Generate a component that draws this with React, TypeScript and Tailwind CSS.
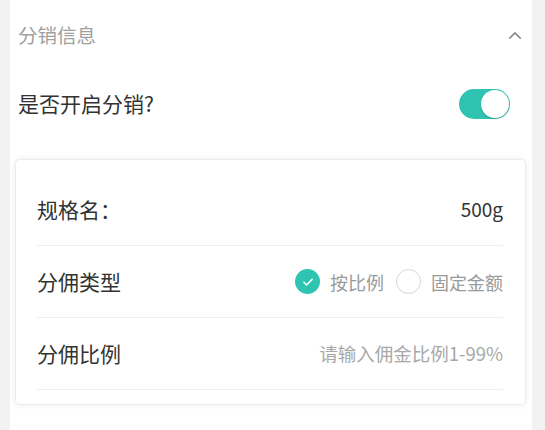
import React, { useState } from 'react';

const font = { fontFamily: '"Noto Sans CJK SC", "Noto Sans", sans-serif' };

const Toggle = ({ on, onChange }: { on: boolean; onChange: (v: boolean) => void }) => (
    <button
        type="button"
        onClick={() => onChange(!on)}
        className={`w-[51px] h-[30px] rounded-full p-[1px] flex items-center transition-colors ${on ? 'bg-[#2ec4b1] justify-end' : 'bg-[#e5e5e5] justify-start'}`}
    >
        <span className="w-[28px] h-[28px] rounded-full bg-white shadow-[0_1px_2px_rgba(0,0,0,0.2)]" />
    </button>
);

const Radio = ({ checked, label, onClick }: { checked: boolean; label: string; onClick: () => void }) => (
    <button type="button" onClick={onClick} className="flex items-center gap-[10px]">
        {checked ? (
            <span className="w-[25px] h-[25px] rounded-full bg-[#2ec4b1] flex items-center justify-center">
                <svg viewBox="0 0 24 24" className="w-[14px] h-[14px]" fill="none" stroke="white" strokeWidth="2.6" strokeLinecap="round" strokeLinejoin="round">
                    <path d="M5 12.5l4.5 4.5L19 7.5" />
                </svg>
            </span>
        ) : (
            <span className="w-[25px] h-[25px] rounded-full border border-[#d6d6d6] bg-white" />
        )}
        <span className="text-[18px] text-[#9a9a9a] leading-none">{label}</span>
    </button>
);

export default function App() {
    const [open, setOpen] = useState(true);
    const [type, setType] = useState<'ratio' | 'fixed'>('ratio');

    return (
        <div className="w-[545px] h-[430px] bg-[#f2f2f2] pl-[10px] pr-[13px] overflow-hidden" style={font}>
            <div className="h-full bg-white pl-[8px] pr-[9px]">
                {/* header */}
                <div className="h-[70px] flex items-center justify-between">
                    <span className="text-[19.5px] text-[#a0a0a0]">分销信息</span>
                    <svg viewBox="0 0 16 10" className="w-[14px] h-[9px] mr-[1px]" fill="none" stroke="#8a8a8a" strokeWidth="1.8" strokeLinecap="round" strokeLinejoin="round">
                        <path d="M2 8l6-6 6 6" />
                    </svg>
                </div>

                <div className="h-[68px] flex items-center justify-between pr-[13px]">
                    <span className="text-[21px] text-[#333]">是否开启分销?</span>
                    <Toggle on={open} onChange={setOpen} />
                </div>

                <div className="mt-[21px] ml-[-3px] mr-[-3px] bg-white rounded-[5px] border border-[#ececec] shadow-[0_0_6px_rgba(0,0,0,0.08)] pl-[21px] pr-[22px] pt-[14px] pb-[14px]">
                    <div className="h-[72px] flex items-center justify-between border-b border-[#efefef]">
                        <span className="text-[21px] text-[#333]">规格名：</span>
                        <span className="text-[19px] text-[#333]">500g</span>
                    </div>
                    <div className="h-[72px] flex items-center justify-between border-b border-[#efefef]">
                        <span className="text-[21px] text-[#333]">分佣类型</span>
                        <div className="flex items-center gap-[12px]">
                            <Radio checked={type === 'ratio'} label="按比例" onClick={() => setType('ratio')} />
                            <Radio checked={type === 'fixed'} label="固定金额" onClick={() => setType('fixed')} />
                        </div>
                    </div>
                    <div className="h-[72px] flex items-center justify-between border-b border-[#efefef]">
                        <span className="text-[21px] text-[#333]">分佣比例</span>
                        <input
                            className="text-right text-[18.5px] text-[#333] placeholder:text-[#a8a8a8] outline-none w-[220px]"
                            placeholder="请输入佣金比例1-99%"
                        />
                    </div>
                </div>
            </div>
        </div>
    );
}
